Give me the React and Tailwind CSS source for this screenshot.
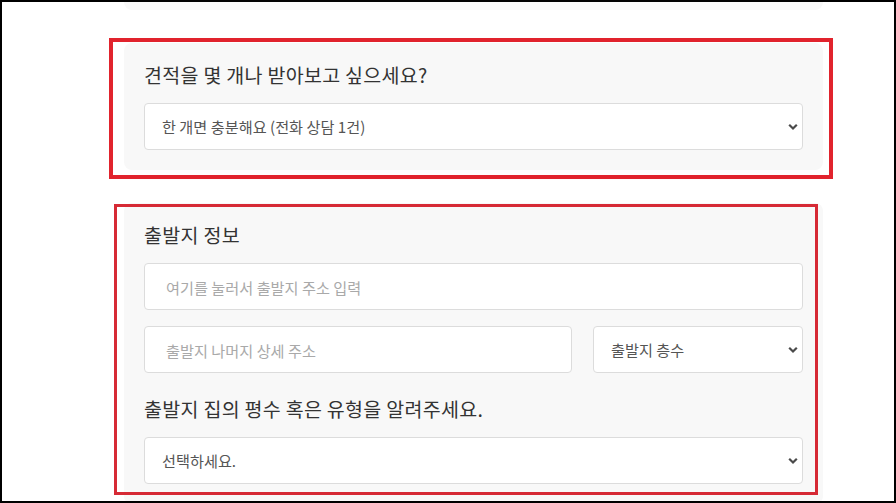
const font = { fontFamily: '"Noto Sans CJK KR", "Noto Sans", sans-serif' };

function Chevron() {
  return (
    <svg
      className="pointer-events-none absolute right-[5px] top-1/2 -translate-y-1/2"
      width="10"
      height="7"
      viewBox="0 0 10 7"
      fill="none"
    >
      <polyline points="1.2,1.2 5,5 8.8,1.2" stroke="#4a4a4a" strokeWidth="2.2" />
    </svg>
  );
}

function Select({ value }) {
  return (
    <div className="relative">
      <select
        defaultValue={value}
        className="h-[47px] w-full appearance-none rounded border border-[#dcdcdc] bg-white pl-[17px] text-[15.2px] text-[#555] outline-none"
      >
        <option>{value}</option>
      </select>
      <Chevron />
    </div>
  );
}

function Input({ placeholder }) {
  return (
    <input
      placeholder={placeholder}
      className="h-[47px] w-full rounded border border-[#dcdcdc] bg-white pl-[21px] text-[15.2px] text-[#555] outline-none placeholder:text-[#a9a9a9]"
    />
  );
}

function Title({ children, className = '' }) {
  return (
    <h3 className={`text-[19.5px] leading-6 font-normal tracking-[0.3px] text-[#333] ${className}`}>
      {children}
    </h3>
  );
}

export default function App() {
  return (
    <div
      style={font}
      className="relative h-[503px] w-[896px] overflow-hidden border-2 border-black bg-white"
    >
      <div className="ml-[122px] flex w-[699px] flex-col">
        {/* 이전 카드의 끝부분 */}
        <div className="h-[8px] rounded-b-lg bg-[#f8f8f8]" />

        <div className="mt-[33px] rounded-lg bg-[#f8f8f8] px-5 pt-5 pb-5">
          <Title className="mb-4">견적을 몇 개나 받아보고 싶으세요?</Title>
          <Select value="한 개면 충분해요 (전화 상담 1건)" />
        </div>

        <div className="mt-[33px] rounded-lg bg-[#f8f8f8] px-5 pt-5 pb-5">
          <Title className="mb-4">출발지 정보</Title>
          <Input placeholder="여기를 눌러서 출발지 주소 입력" />
          <div className="mt-4 grid grid-cols-[428px_1fr] gap-[21px]">
            <Input placeholder="출발지 나머지 상세 주소" />
            <Select value="출발지 층수" />
          </div>
          <Title className="mt-6 mb-4">출발지 집의 평수 혹은 유형을 알려주세요.</Title>
          <Select value="선택하세요." />
        </div>
      </div>

      {/* 강조 표시 박스 */}
      <div className="pointer-events-none absolute left-[107px] top-[36px] h-[141px] w-[724px] border-4 border-[#e1232d]" />
      <div className="pointer-events-none absolute left-[112px] top-[202px] h-[291px] w-[704px] border-[3.5px] border-[#d62a35]" />
    </div>
  );
}
